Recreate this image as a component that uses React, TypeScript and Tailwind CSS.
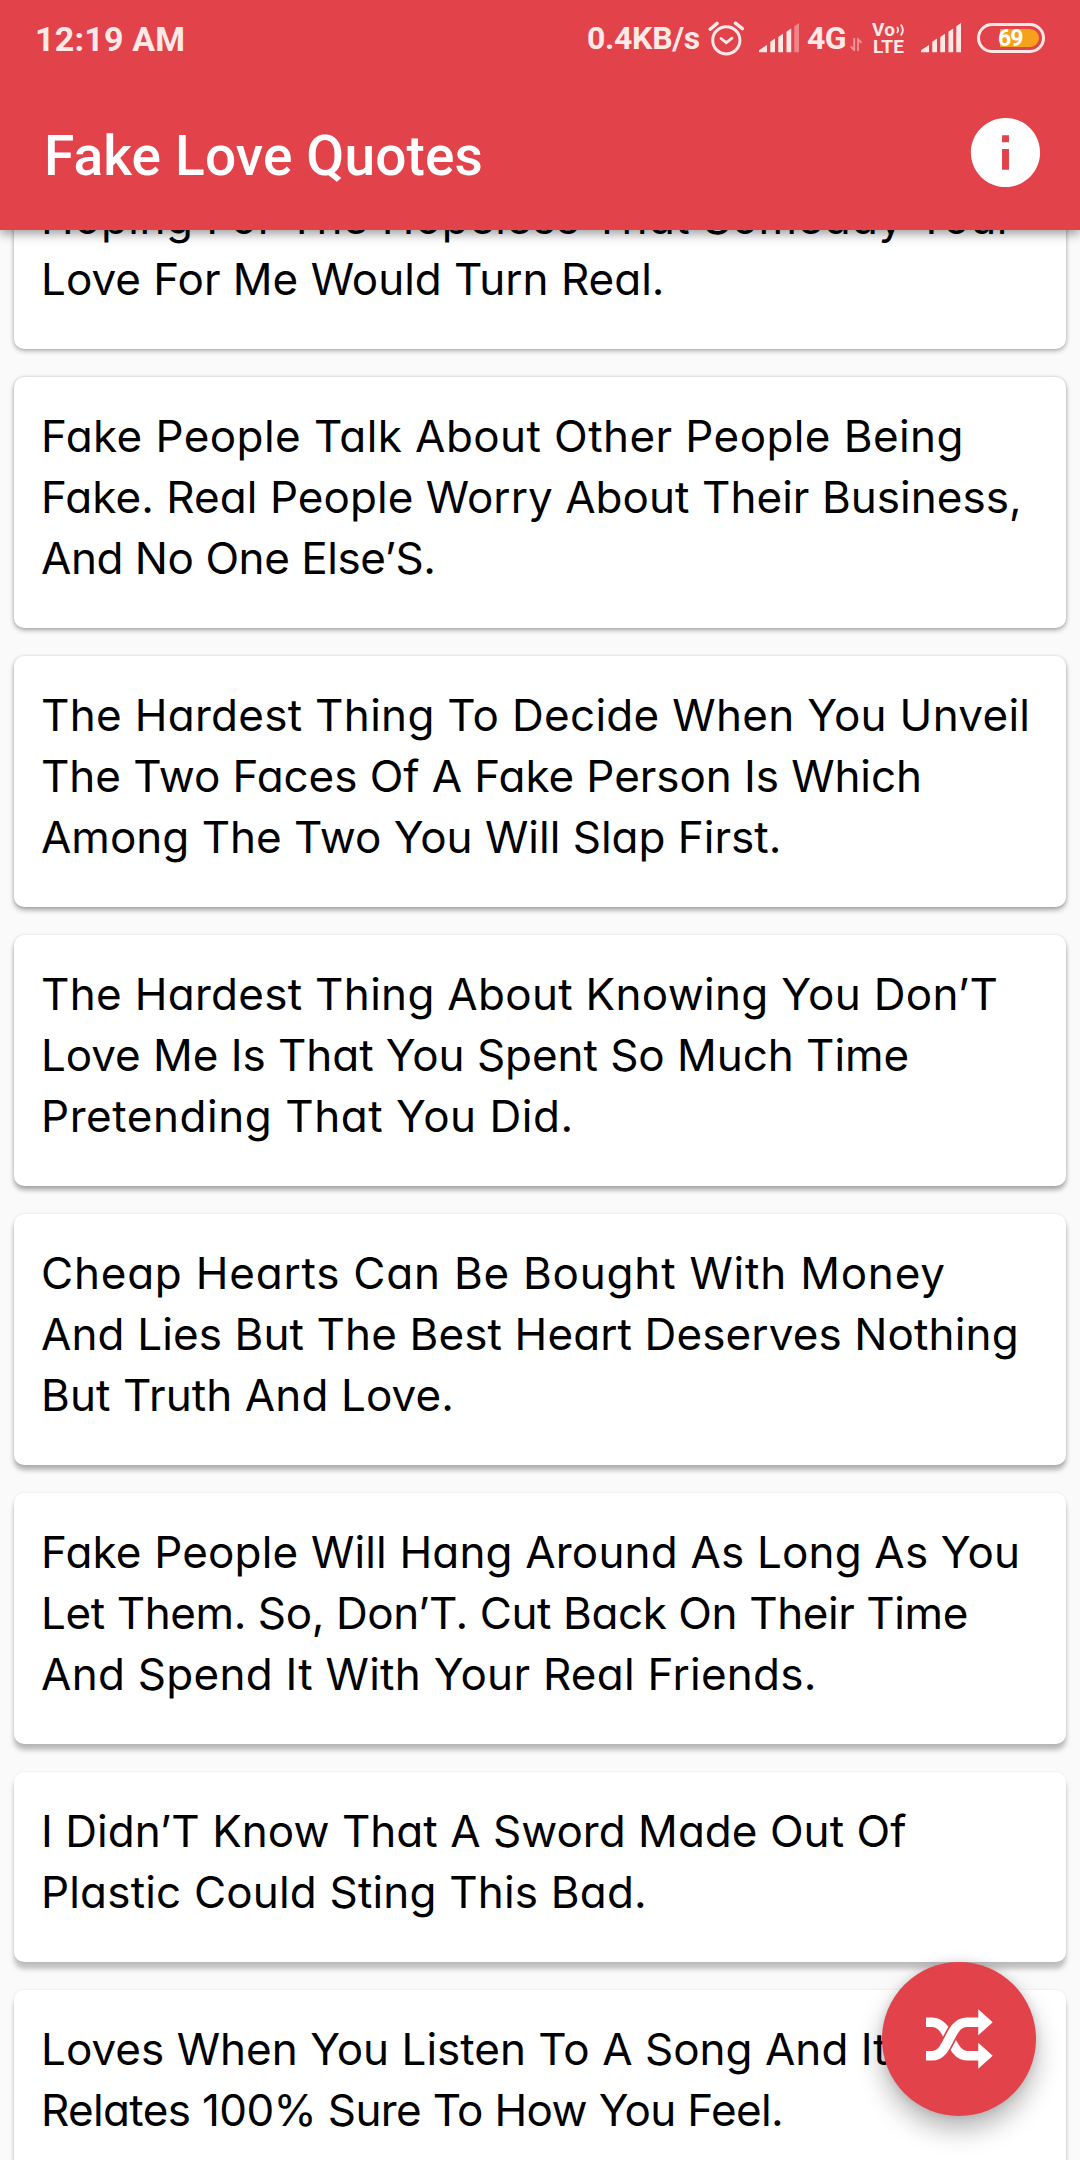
interface Line {
  text: string
  tracking: string
}

interface Quote {
  shadow: string
  lines: Line[]
}

const QUOTES: Quote[] = [
  {
    shadow: 'shadow-[0_2px_5px_rgba(0,0,0,0.3),0_0_3px_rgba(0,0,0,0.12)]',
    lines: [
      { text: 'Hoping For The Hopeless That Someday Your', tracking: 'tracking-[0.45px]' },
      { text: 'Love For Me Would Turn Real.', tracking: 'tracking-normal' },
    ],
  },
  {
    shadow: 'shadow-[0_2px_5px_rgba(0,0,0,0.34),0_0_3px_rgba(0,0,0,0.12)]',
    lines: [
      { text: 'Fake People Talk About Other People Being', tracking: 'tracking-[0.42px]' },
      { text: 'Fake. Real People Worry About Their Business,', tracking: 'tracking-[0.05px]' },
      { text: 'And No One Else’S.', tracking: 'tracking-[-0.45px]' },
    ],
  },
  {
    shadow: 'shadow-[0_3px_5px_rgba(0,0,0,0.34),0_0_3px_rgba(0,0,0,0.12)]',
    lines: [
      { text: 'The Hardest Thing To Decide When You Unveil', tracking: 'tracking-[0.3px]' },
      { text: 'The Two Faces Of A Fake Person Is Which', tracking: 'tracking-[-0.07px]' },
      { text: 'Among The Two You Will Slap First.', tracking: 'tracking-normal' },
    ],
  },
  {
    shadow: 'shadow-[0_4px_5px_rgba(0,0,0,0.32),0_0_3px_rgba(0,0,0,0.12)]',
    lines: [
      { text: 'The Hardest Thing About Knowing You Don’T', tracking: 'tracking-[0.3px]' },
      { text: 'Love Me Is That You Spent So Much Time', tracking: 'tracking-[-0.05px]' },
      { text: 'Pretending That You Did.', tracking: 'tracking-[0.55px]' },
    ],
  },
  {
    shadow: 'shadow-[0_5px_5px_rgba(0,0,0,0.29),0_0_3px_rgba(0,0,0,0.1)]',
    lines: [
      { text: 'Cheap Hearts Can Be Bought With Money', tracking: 'tracking-[0.78px]' },
      { text: 'And Lies But The Best Heart Deserves Nothing', tracking: 'tracking-[0.12px]' },
      { text: 'But Truth And Love.', tracking: 'tracking-[0.1px]' },
    ],
  },
  {
    shadow: 'shadow-[0_6px_5px_rgba(0,0,0,0.26),0_0_3px_rgba(0,0,0,0.08)]',
    lines: [
      { text: 'Fake People Will Hang Around As Long As You', tracking: 'tracking-[0.17px]' },
      { text: 'Let Them. So, Don’T. Cut Back On Their Time', tracking: 'tracking-[-0.41px]' },
      { text: 'And Spend It With Your Real Friends.', tracking: 'tracking-[0.27px]' },
    ],
  },
  {
    shadow: 'shadow-[0_7px_5px_rgba(0,0,0,0.23),0_0_3px_rgba(0,0,0,0.08)]',
    lines: [
      { text: 'I Didn’T Know That A Sword Made Out Of', tracking: 'tracking-[0.03px]' },
      { text: 'Plastic Could Sting This Bad.', tracking: 'tracking-[0.18px]' },
    ],
  },
  {
    shadow: 'shadow-[0_7px_5px_rgba(0,0,0,0.23),0_0_3px_rgba(0,0,0,0.08)]',
    lines: [
      { text: 'Loves When You Listen To A Song And It', tracking: 'tracking-[0.02px]' },
      { text: 'Relates 100% Sure To How You Feel.', tracking: 'tracking-[-0.64px]' },
    ],
  },
]

function AlarmIcon() {
  return (
    <svg className="ml-2 h-[36px] w-[36px]" viewBox="0 0 36 36" fill="none" stroke="#ffe9e7" strokeLinecap="round">
      <circle cx="18.3" cy="20.3" r="13.6" strokeWidth="3" />
      <path d="M13 18.5l5.3 4.2 5.7-4.5" strokeWidth="2.8" />
      <path d="M2.2 9.2L9 3.4M27.4 3.2l7 5.4" strokeWidth="3.4" />
    </svg>
  )
}

function SignalIcon({ className, weak = false }: { className: string; weak?: boolean }) {
  return (
    <svg className={`h-[30px] w-[41px] ${className}`} viewBox="0 0 41 30" fill="#ffe9e7">
      <path d="M0 29.3v-2L8 22v7.3z" />
      <path d="M11.3 18.7l4.7-3.2v13.8h-4.7z" />
      <path d="M19.3 14l4.7-3.2v18.5h-4.7z" />
      <path d="M27.5 8.8l4.7-3.2v23.7h-4.7z" />
      <path d="M35.3 3.2L40 0v29.3h-4.7z" opacity={weak ? 0.4 : 1} />
    </svg>
  )
}

function DataArrows() {
  return (
    <svg className="mt-[13px] ml-[4px] h-[13px] w-[12px]" viewBox="0 0 12 13" fill="none" stroke="#ffe9e7" strokeWidth="1.8" opacity="0.5">
      <path d="M4.2 0v12L.6 8.4" />
      <path d="M8 13V1.2l3.4 3.6" />
    </svg>
  )
}

function VolteIcon() {
  return (
    <div className="ml-[10px] flex w-[34px] flex-col font-bold text-[#ffe9e7]">
      <div className="flex h-[17px] items-center text-[19px] leading-[17px]">
        <span className="tracking-[0.3px]">Vo</span>
        <svg className="ml-px h-[14px] w-[9px]" viewBox="0 0 9 14" fill="none" stroke="#ffe9e7" strokeWidth="1.8">
          <path d="M1 4q2.2 3 0 6M4.8 1.5q4.2 5.5 0 11" />
        </svg>
      </div>
      <span className="h-[17px] pl-px text-[19px] leading-[17px] tracking-[0.2px]">LTE</span>
    </div>
  )
}

function Battery() {
  return (
    <div className="ml-[15px] flex h-[30px] w-[68px] items-center rounded-full border-[3px] border-[#ffe9e7] p-[3px]">
      <div className="ml-[17px] flex h-[18px] w-[39px] items-center rounded-r-full bg-[#f5a11c]">
        <span className="-ml-[2px] text-[23px] leading-none font-bold tracking-[-1px] text-white">69</span>
      </div>
    </div>
  )
}

function StatusBar() {
  return (
    <div className="flex h-[76px] items-center pl-[35px] font-bold whitespace-nowrap text-[#ffe9e7]">
      <span className="w-[552px] pt-[2px] text-[34px] tracking-[0.2px]">12:19 AM</span>
      <span className="w-[113px] text-[32px] tracking-[-0.3px]">0.4KB/s</span>
      <AlarmIcon />
      <SignalIcon className="ml-[15px]" weak />
      <span className="ml-[7px] w-[39px] text-[32px] tracking-[-0.5px]">4G</span>
      <DataArrows />
      <VolteIcon />
      <SignalIcon className="ml-[15px]" />
      <Battery />
    </div>
  )
}

function Header() {
  return (
    <header className="relative z-10 h-[230px] bg-[#e2434b] shadow-[0_4px_10px_rgba(0,0,0,0.38)]">
      <StatusBar />
      <div className="flex h-[154px] items-start justify-between pr-[33px] pl-[44px]">
        <h1 className="pt-[39px] text-[55px] leading-[82px] font-medium tracking-[0.15px] text-white">Fake Love Quotes</h1>
        <svg className="mt-[35px] h-[83px] w-[83px]" viewBox="0 0 24 24" fill="#fff">
          <path d="M12 2C6.480 2 2 6.480 2 12s4.480 10 10 10 10-4.480 10-10S17.520 2 12 2zm1 15h-2v-6h2v6zm0-8h-2V7h2v2z" />
        </svg>
      </div>
    </header>
  )
}

function QuoteCard({ quote }: { quote: Quote }) {
  return (
    <article className={`shrink-0 rounded-[10px] bg-white pt-[29px] pr-7 pb-[39px] pl-[27px] ${quote.shadow}`}>
      {quote.lines.map(line => (
        <p
          key={line.text}
          className={`text-[44px] leading-[61px] whitespace-nowrap text-black [font-feature-settings:'cv11'] ${line.tracking}`}
        >
          {line.text}
        </p>
      ))}
    </article>
  )
}

function ShuffleButton() {
  return (
    <button
      aria-label="Shuffle"
      className="absolute top-[1962px] left-[882px] z-20 flex h-[154px] w-[154px] items-center justify-center rounded-full bg-[#e2434b] shadow-[0_14px_26px_rgba(0,0,0,0.28),0_0_10px_rgba(0,0,0,0.12)]"
    >
      <svg className="h-[60px] w-[67px]" viewBox="0 0 200 178" fill="none" strokeWidth="29">
        <path d="M0 39h18C72 39 72 139 122 139h38" stroke="#fff" />
        <path d="M18 139C72 139 66 39 122 39" stroke="#e2434b" strokeWidth="39" />
        <path d="M0 139h18C72 139 66 39 122 39h38" stroke="#fff" />
        <path d="M156 0l43 39-43 39zM156 100l43 39-43 39z" fill="#fff" stroke="none" />
      </svg>
    </button>
  )
}

export default function App() {
  return (
    <div className="relative h-[2160px] w-[1080px] overflow-hidden bg-[#fafafa] font-['Roboto',sans-serif]">
      <Header />
      {/* List is scrolled, so the first card sits partly under the header */}
      <main className="-mt-[71px] flex flex-col gap-7 px-[14px] font-['Inter',sans-serif]">
        {QUOTES.map(quote => (
          <QuoteCard key={quote.lines[0].text} quote={quote} />
        ))}
      </main>
      <ShuffleButton />
    </div>
  )
}
